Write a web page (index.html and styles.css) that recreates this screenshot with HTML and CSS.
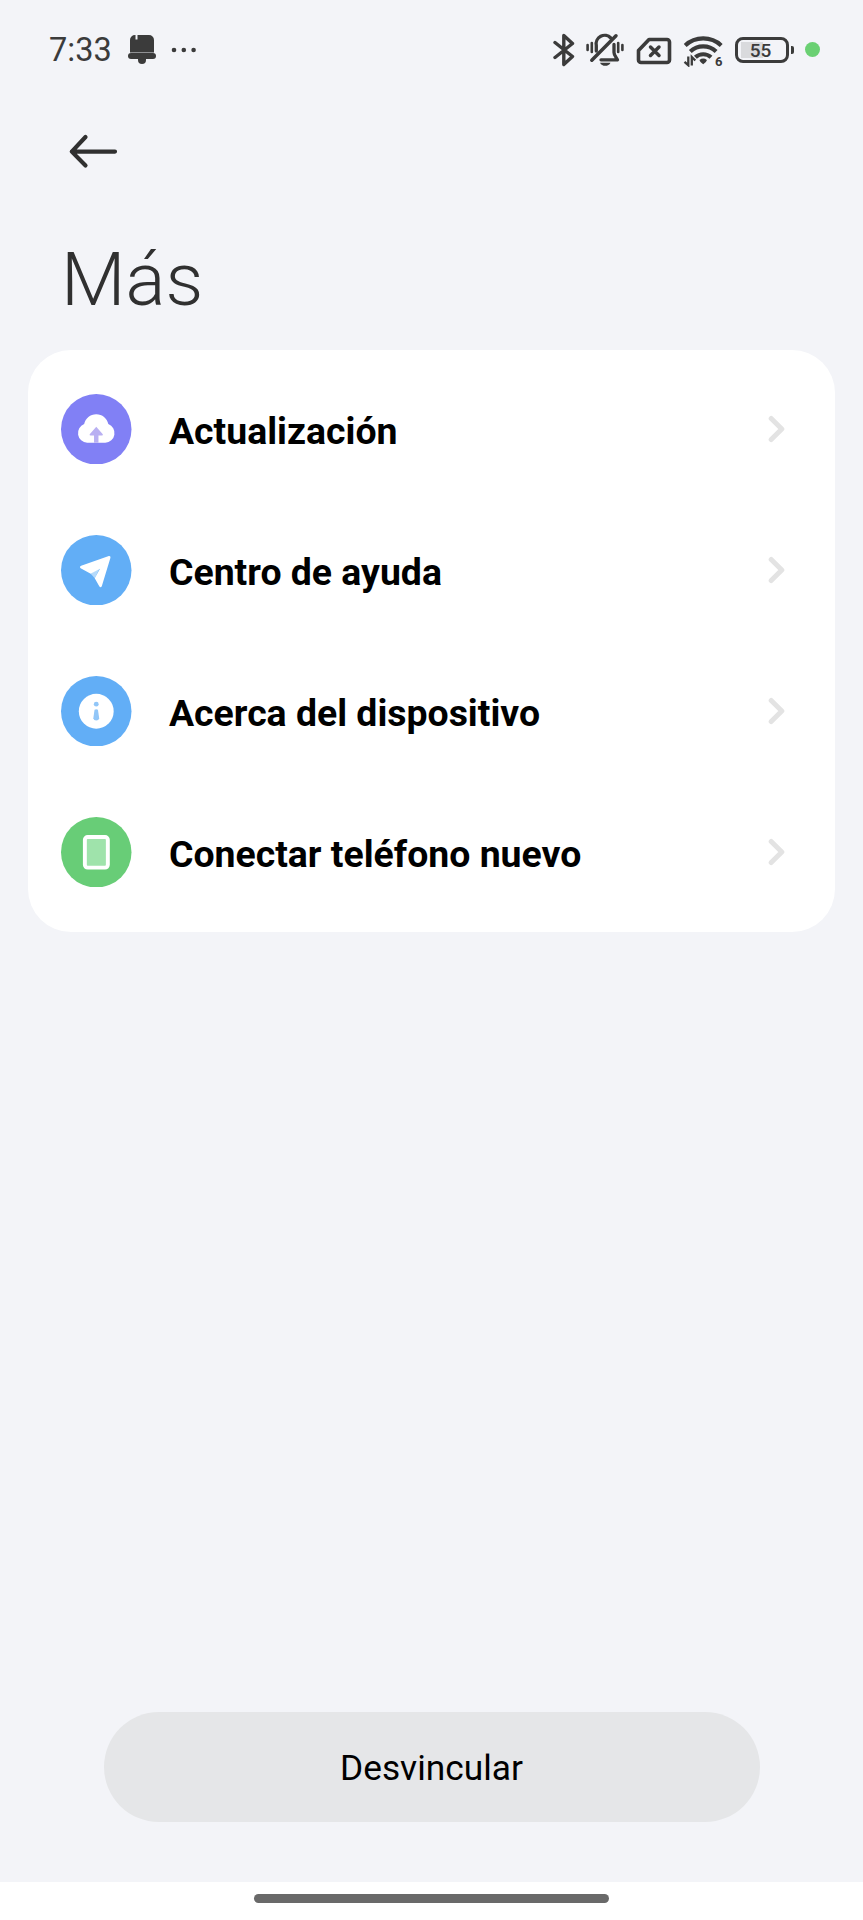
FILE: index.html
```html
<!DOCTYPE html>
<html lang="es">
<head>
    <meta charset="UTF-8">
    <meta name="viewport" content="width=device-width, initial-scale=1.0">
    <title>Más</title>
    <link rel="stylesheet" href="styles.css">
</head>

<body>
    <div class="screen">
        <header class="status">
            <div class="status-left">
                <span class="time">7:33</span>
                <svg class="bell" width="30" height="32" viewBox="0 0 30 32" fill="#3b3b3b">
                    <path d="M3 18V6a5 5 0 0 1 5-5h.5v4.500h2V1H22a5 5 0 0 1 5 5v12z" />
                    <rect x="1" y="19" width="28" height="6" rx="3" />
                    <path d="M11 24.500h8v1.500a4 4 0 0 1-8 0z" />
                    <path d="M3 18.500h24" stroke="#8f9093" stroke-width="1" />
                </svg>
                <svg width="26" height="6" viewBox="0 0 26 6" fill="#3b3b3b">
                    <circle cx="3" cy="3" r="2.300" />
                    <circle cx="12.800" cy="3" r="2.300" />
                    <circle cx="22.600" cy="3" r="2.300" />
                </svg>
            </div>
            <div class="status-right">
                <!-- bluetooth -->
                <svg class="bt" width="22" height="34" viewBox="0 0 22 34" fill="none" stroke="#3b3b3b" stroke-width="3.400" stroke-linecap="round" stroke-linejoin="round">
                    <path d="M2 9.500L19.500 23.500L10.800 31.500V2.500L19.500 10.500L2 24.500" />
                </svg>
                <!-- silencio -->
                <svg class="mute" width="38" height="34" viewBox="0 0 38 34" fill="none" stroke="#3b3b3b" stroke-width="3.300" stroke-linecap="round" stroke-linejoin="round">
                    <path d="M5.800 27.200L30 2.800" stroke-width="3.500" />
                    <path d="M10.300 18V12.500a8.500 8.500 0 0 1 14.500-7.500M28 11.500v8c0 2.500 1.500 4 3.500 7.300H15" />
                    <path d="M14 29.700h10.500c-1 2.200-2.900 3.100-5.200 3.100s-4.200-.900-5.300-3.100z" fill="#3b3b3b" stroke="none" />
                    <path d="M1.600 12v5M5.800 10v9M32.200 10v9M36.400 12v5" stroke-width="2.600" />
                </svg>
                <!-- sin sim -->
                <svg class="sim" width="36" height="28" viewBox="0 0 36 28" fill="none" stroke="#3b3b3b" stroke-linecap="round" stroke-linejoin="round">
                    <path d="M13 2.500H31a2.500 2.500 0 0 1 2.500 2.500V23a2.500 2.500 0 0 1-2.500 2.500H5A2.500 2.500 0 0 1 2.500 23V13.500z" stroke-width="3.600" />
                    <path d="M14.500 10l8.500 8.500M23 10l-8.500 8.500" stroke-width="3.500" />
                </svg>
                <!-- wifi -->
                <svg class="wifi" width="42" height="32" viewBox="0 0 42 32" fill="none" stroke="#3b3b3b">
                    <path d="M2.200 10.500a26.500 26.500 0 0 1 36 0M7.300 16.500a19 19 0 0 1 25.800 0M12.400 22.300a11.500 11.500 0 0 1 15.600 0" stroke-width="4.200" />
                    <path d="M16.500 25a6 6 0 0 1 7.400 0c0 1.200-2.200 3.200-3.700 4.300c-1.500-1.100-3.700-3.100-3.700-4.300z" fill="#3b3b3b" stroke="none" />
                    <path d="M5.300 21.500v8.700L1.500 26.800M8.800 30.500v-8.500l3.500 3.500" stroke-width="2.300" />
                    <text x="32" y="30.500" class="wifi-num">6</text>
                </svg>
                <div class="battery"><span>55</span></div>
                <i class="tip"></i>
                <i class="dot"></i>
            </div>
        </header>

        <svg class="back" width="50" height="36" viewBox="0 0 50 36" fill="none" stroke="#303030" stroke-width="4.200" stroke-linecap="round" stroke-linejoin="round">
            <path d="M47 17.600H3.800M17.500 3L3.800 17.600L17.500 31.500" />
        </svg>

        <h1>Más</h1>

        <div class="card">
            <div class="row">
                <svg class="ico" viewBox="0 0 70 70">
                    <circle cx="35" cy="35" r="35" fill="#8180f5" />
                    <path d="M26 48.500a9.700 9.700 0 0 1-3-18.700C24.300 24 29 20 35 20s10.700 4 12 9.800a9.700 9.700 0 0 1-3 18.700z" fill="#fff" />
                    <path d="M35 32.500l6.500 7.500q.5 1.300-1 1.300H37.200v7.200h-4.400v-7.200H29.500q-1.500 0-1-1.300z" fill="#b9b0f2" />
                </svg>
                <span class="name">Actualización</span>
                <svg class="arr" viewBox="0 0 18 28"><path d="M3.200 3.500L13.800 14L3.200 24.500" /></svg>
            </div>
            <div class="row">
                <svg class="ico" viewBox="0 0 70 70">
                    <circle cx="35" cy="35" r="35" fill="#62aef6" />
                    <path d="M29.500 38.500L39 32L33.500 43z" fill="#b5dafb" />
                    <path d="M47.500 20.800q2-.3 1.600 1.700L40.500 51q-1.200 2-2.500 0L33.500 43L38.700 33.500L29.500 38.500L19.500 33q-1.500-1.500.5-2.500z" fill="#fff" />
                </svg>
                <span class="name">Centro de ayuda</span>
                <svg class="arr" viewBox="0 0 18 28"><path d="M3.200 3.500L13.800 14L3.200 24.500" /></svg>
            </div>
            <div class="row">
                <svg class="ico" viewBox="0 0 70 70">
                    <circle cx="35" cy="35" r="35" fill="#62aef6" />
                    <circle cx="35" cy="35" r="17.300" fill="#fff" />
                    <circle cx="35" cy="28" r="2.400" fill="#91c6f8" />
                    <path d="M33.300 33.500q1.700-1.200 3.400 0l1.200 8.500q-.4 2.300-2.900 2.300t-2.900-2.300z" fill="#91c6f8" />
                </svg>
                <span class="name">Acerca del dispositivo</span>
                <svg class="arr" viewBox="0 0 18 28"><path d="M3.200 3.500L13.800 14L3.200 24.500" /></svg>
            </div>
            <div class="row">
                <svg class="ico" viewBox="0 0 70 70">
                    <circle cx="35" cy="35" r="35" fill="#68cd77" />
                    <rect x="23.700" y="19.800" width="22.800" height="30.500" rx="2.800" fill="#9fe3ab" stroke="#fff" stroke-width="3.900" />
                </svg>
                <span class="name">Conectar teléfono nuevo</span>
                <svg class="arr" viewBox="0 0 18 28"><path d="M3.200 3.500L13.800 14L3.200 24.500" /></svg>
            </div>
        </div>

        <button class="unlink">Desvincular</button>

        <div class="nav"><div></div></div>
    </div>
</body>

</html>
```

FILE: styles.css
```css
* {
    box-sizing: border-box;
}

body {
    margin: 0;
    font-family: Roboto, sans-serif;
    background: #f3f4f8;
}

.screen {
    display: flex;
    flex-direction: column;
    height: 1920px;
    overflow: hidden;
}

.status {
    display: flex;
    justify-content: space-between;
    height: 99px;
    padding: 0 43px 0 49px;
    flex-shrink: 0;
}

.status-left,
.status-right {
    display: flex;
    align-items: center;
}

.time {
    font-size: 32.500px;
    line-height: 40px;
    color: #3b3b3b;
    margin: 1px 15px 0 0;
}

.bell {
    margin-right: 14px;
}

.mute {
    margin-left: 11px;
}

.sim {
    margin: 3px 0 0 12px;
}

.wifi {
    margin: 2px 0 0 11px;
}

.wifi-num {
    font-size: 13px;
    font-weight: 700;
    fill: #3b3b3b;
    stroke: none;
}

.battery {
    width: 54px;
    height: 26px;
    margin-left: 10px;
    border: 3px solid #3b3b3b;
    border-radius: 8px;
    text-align: center;
    font-size: 19px;
    font-weight: 500;
    line-height: 21px;
    color: #3b3b3b;
    background: linear-gradient(#d9dadd, #d9dadd) 3px 2px / 22px 16px no-repeat;
}

.battery span {
    margin-right: 3px;
}

.tip {
    width: 3px;
    height: 8px;
    margin-left: 2px;
    border-radius: 0 2px 2px 0;
    background: #3b3b3b;
}

.dot {
    width: 15px;
    height: 15px;
    margin-left: 11px;
    border-radius: 50%;
    background: #6ad073;
}

.back {
    margin: 35px 0 0 68px;
    flex-shrink: 0;
}

h1 {
    margin: 66px 0 0 61px;
    font-size: 74.500px;
    font-weight: 300;
    line-height: 88px;
    color: #303030;
}

.card {
    width: 807px;
    margin: 25.500px 0 0 28px;
    padding: 9px 0 9px;
    border-radius: 43px;
    background: #fff;
}

.row {
    display: flex;
    align-items: center;
    height: 141px;
    padding: 0 49px 0 33px;
}

.ico {
    width: 70.500px;
    height: 70.500px;
}

.name {
    flex: 1;
    margin-left: 37.500px;
    font-size: 37.400px;
    font-weight: 700;
    line-height: 44px;
    padding-top: 3px;
    color: #000;
}

.arr {
    width: 18px;
    height: 28px;
    fill: none;
    stroke: #e3e3e3;
    stroke-width: 5;
    stroke-linecap: round;
    stroke-linejoin: round;
}

.unlink {
    width: 656px;
    height: 110px;
    margin: auto auto 60px;
    padding: 2px 0 0;
    border: 0;
    border-radius: 55px;
    background: #e5e6e8;
    font-family: inherit;
    font-size: 35.300px;
    color: #000;
    flex-shrink: 0;
}

.nav {
    height: 38px;
    padding-top: 12px;
    background: #fff;
    flex-shrink: 0;
}

.nav div {
    width: 355px;
    height: 9px;
    margin: 0 auto;
    border-radius: 5px;
    background: #696969;
}
```
